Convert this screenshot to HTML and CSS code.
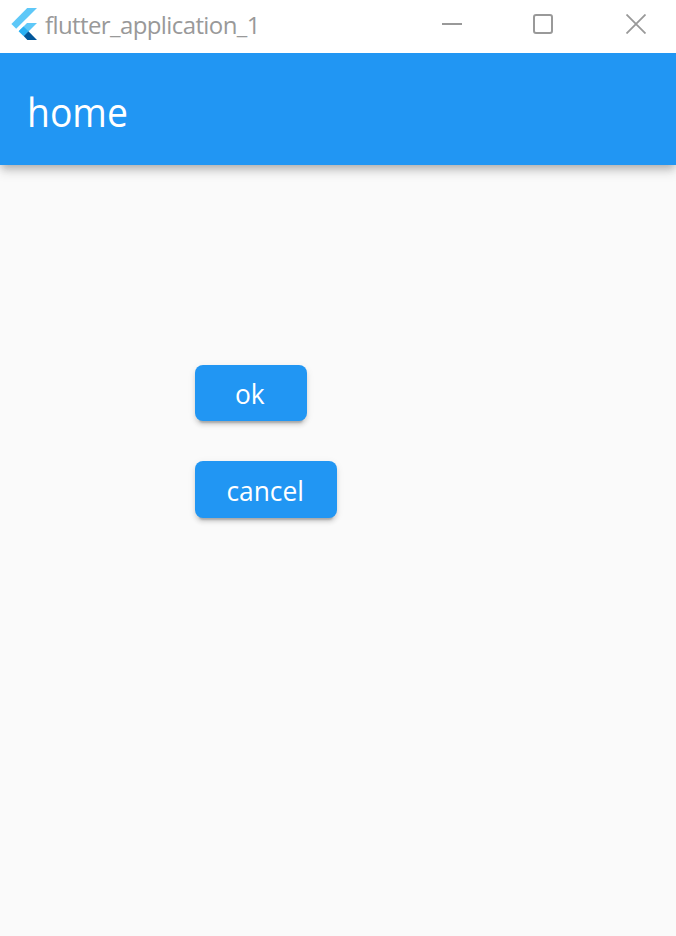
FILE: index.html
```html
<!DOCTYPE html>
<html lang="en">
<head>
<meta charset="utf-8">
<title>flutter_application_1</title>
<link rel="stylesheet" href="styles.css">
</head>
<body>
<div class="window">
  <header class="titlebar">
    <svg class="logo" width="26" height="32" viewBox="0 0 26 32">
      <path fill="#5ec8f8" d="M16.2 0H26L5.2 20.7L.4 16Z"/>
      <path fill="#5ec8f8" d="M16 15H26L17.5 23.5L12.6 28L7.7 23.3Z"/>
      <path fill="#01579b" d="M12.6 28.1L17.4 23.3L26 32H16.4Z"/>
      <path fill="#29b0f3" d="M7.7 23.3L12.5 18.5L17.4 23.3L12.5 28.1Z"/>
    </svg>
    <span class="caption">flutter_application_1</span>
    <div class="controls">
      <svg width="20" height="20" viewBox="0 0 20 20"><path d="M0 10H20"/></svg>
      <svg width="20" height="20" viewBox="0 0 20 20"><rect x="1" y="1" width="18" height="18" rx="2"/></svg>
      <svg width="20" height="20" viewBox="0 0 20 20"><path class="cross" d="M.5 .5L19.5 19.5M19.5 .5L.5 19.5"/></svg>
    </div>
  </header>
  <div class="appbar"><h1 class="title">home</h1></div>
  <main class="body">
    <button class="btn ok"><span>ok</span></button>
    <button class="btn cancel"><span>cancel</span></button>
  </main>
</div>
</body>
</html>
```

FILE: styles.css
```css
* { box-sizing: border-box; }
body { margin: 0; font-family: "Open Sans", "Noto Sans", sans-serif; }
.window { height: 936px; display: flex; flex-direction: column; background: #fafafa; overflow: hidden; }
.titlebar { height: 53px; flex: none; display: flex; align-items: flex-start; background: #fff; padding: 8px 30px 0 11px; }
.logo { flex: none; }
.caption { margin-left: 8px; font-size: 24px; line-height: 34px; letter-spacing: -0.6px; color: #999; white-space: nowrap; }
.controls { margin: 6px 0 0 auto; display: flex; }
.controls svg { display: block; fill: none; stroke: #999; stroke-width: 2; }
.controls svg + svg { margin-left: 71px; }
.controls svg:last-child { margin-left: 73px; }
.controls .cross { stroke-width: 1.8; }
.appbar { height: 112px; flex: none; display: flex; align-items: center; padding: 5px 0 0 27px; background: #2196f3; color: #fff; position: relative; clip-path: inset(0 0 -30px 0);
  box-shadow: 0 4px 8px -2px rgba(0,0,0,.2), 0 8px 10px rgba(0,0,0,.1), 0 2px 10px rgba(0,0,0,.08); }
.title { margin: 0; font-size: 39.5px; line-height: 54px; font-weight: 400; transform: scaleX(.945); transform-origin: left center; }
.body { display: flex; flex-direction: column; align-items: flex-start; gap: 40px; padding: 200px 0 0 195px; }
.btn { display: flex; align-items: center; justify-content: center; padding: 1px 1px 0 0; border: 0; border-radius: 8px; background: #2196f3; color: #fff; font: 400 28px/38px "Open Sans", "Noto Sans", sans-serif;
  box-shadow: 0 6px 2px -4px rgba(0,0,0,.2), 0 4px 4px rgba(0,0,0,.12), 0 2px 8px rgba(0,0,0,.07); }
.btn span { transform: scaleX(.94); }
.ok { width: 112px; height: 56px; padding: 0 2px 0 0; }
.cancel { width: 142px; height: 57px; }
```
